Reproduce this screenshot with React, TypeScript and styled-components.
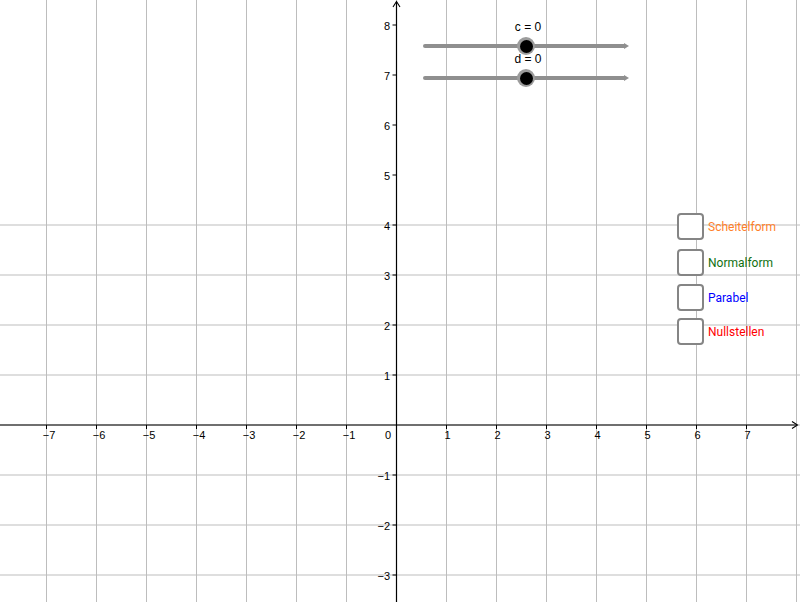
import React from "react";
import styled, { createGlobalStyle } from "styled-components";

const Global = createGlobalStyle`
  html, body { margin: 0; padding: 0; background: #ffffff; }
  body { font-family: "Liberation Sans", Arial, sans-serif; }
`;

const Stage = styled.div`
  position: relative;
  width: 800px;
  height: 602px;
  overflow: hidden;
  background: #ffffff;
`;

const Graph = styled.svg`
  display: block;
  width: 800px;
  height: 602px;
`;

const SliderStack = styled.div`
  position: absolute;
  left: 423px;
  top: 20px;
  display: flex;
  flex-direction: column;
`;

const Slider = styled.div`
  display: flex;
  flex-direction: column;
  width: 206px;
`;

const SliderLabel = styled.div`
  text-align: center;
  padding-left: 4px;
  font-family: "Liberation Sans", Arial, sans-serif;
  font-size: 12px;
  line-height: 14px;
  color: #000;
`;

const TrackRow = styled.div`
  position: relative;
  display: flex;
  align-items: center;
  height: 12px;
  margin-top: 6px;
`;

const Track = styled.div`
  flex: 1;
  height: 4px;
  background: #8f8f8f;
  border-radius: 2px 0 0 2px;
`;

const TrackTip = styled.div`
  width: 0;
  height: 0;
  border-top: 3.5px solid transparent;
  border-bottom: 3.5px solid transparent;
  border-left: 5px solid #8f8f8f;
`;

const Knob = styled.div`
  position: absolute;
  left: 94px;
  top: -3px;
  width: 18px;
  height: 18px;
  border-radius: 50%;
  background: #9c9c9c;
  display: flex;
  align-items: center;
  justify-content: center;
  &::after {
    content: "";
    width: 13px;
    height: 13px;
    border-radius: 50%;
    background: #000;
  }
`;

const CheckList = styled.div`
  position: absolute;
  left: 677px;
  top: 213px;
  display: flex;
  flex-direction: column;
`;

const CheckRow = styled.div<{ $gap: number }>`
  display: flex;
  align-items: center;
  gap: 4px;
  height: 27px;
  margin-bottom: ${(p) => p.$gap}px;
`;

const Box = styled.div`
  box-sizing: border-box;
  width: 27px;
  height: 27px;
  border: 2px solid #858585;
  border-radius: 4px;
  background: #fff;
`;

const CheckLabel = styled.span<{ $color: string }>`
  font-family: Roboto, "Liberation Sans", Arial, sans-serif;
  font-size: 12px;
  color: ${(p) => p.$color};
  line-height: 14px;
`;

const OX = 396.5;
const OY = 425;
const U = 50;

const xs = [-7, -6, -5, -4, -3, -2, -1, 1, 2, 3, 4, 5, 6, 7];
const ys = [8, 7, 6, 5, 4, 3, 2, 1, -1, -2, -3];

const num = (n: number) => (n < 0 ? "\u2212" + Math.abs(n) : String(n));

const checks = [
  { label: "Scheitelform", color: "#ff7f2a", gap: 9 },
  { label: "Normalform", color: "#107010", gap: 8 },
  { label: "Parabel", color: "#0000ff", gap: 7 },
  { label: "Nullstellen", color: "#ff0000", gap: 0 },
];

const sliders = ["c = 0", "d = 0"];

export default function App() {
  const vLines: number[] = [];
  for (let i = -8; i <= 8; i++) vLines.push(OX + i * U);
  const hLines: number[] = [];
  for (let j = -4; j <= 9; j++) hLines.push(OY + j * U);

  return (
    <Stage>
      <Global />
      <Graph viewBox="0 0 800 602">
        {vLines.map((x) => (
          <line key={"v" + x} x1={x} y1={0} x2={x} y2={602} stroke="#bdbdbd" strokeWidth={1} />
        ))}
        {hLines.map((y) => (
          <line key={"h" + y} x1={0} y1={y} x2={800} y2={y} stroke="#bdbdbd" strokeWidth={1} />
        ))}
        <line x1={0} y1={OY} x2={797} y2={OY} stroke="#000" strokeWidth={1.2} />
        <line x1={OX} y1={2} x2={OX} y2={602} stroke="#000" strokeWidth={1.2} />
        <polyline points={`${OX - 3.5},7 ${OX},1.5 ${OX + 3.5},7`} fill="none" stroke="#000" strokeWidth={1.1} />
        <polyline points={`792,${OY - 3.5} 797.5,${OY} 792,${OY + 3.5}`} fill="none" stroke="#000" strokeWidth={1.1} />
        {xs.map((n) => (
          <g key={"tx" + n}>
            <line x1={OX + n * U} y1={OY} x2={OX + n * U} y2={OY + 4} stroke="#000" strokeWidth={1} />
            <text
              x={OX + n * U + (n < 0 ? 2.5 : 1)}
              y={439}
              textAnchor="middle"
              fontFamily="'Liberation Sans', Arial, sans-serif"
              fontSize={11}
              fill="#000"
            >
              {num(n)}
            </text>
          </g>
        ))}
        {ys.map((n) => (
          <g key={"ty" + n}>
            <line x1={OX - 4} y1={OY - n * U} x2={OX} y2={OY - n * U} stroke="#000" strokeWidth={1} />
            <text
              x={390}
              y={OY - n * U + 4.5}
              textAnchor="end"
              fontFamily="'Liberation Sans', Arial, sans-serif"
              fontSize={11}
              fill="#000"
            >
              {num(n)}
            </text>
          </g>
        ))}
        <text x={391} y={439} textAnchor="end" fontFamily="'Liberation Sans', Arial, sans-serif" fontSize={11} fill="#000">
          0
        </text>
      </Graph>
      <SliderStack>
        {sliders.map((s) => (
          <Slider key={s}>
            <SliderLabel>{s}</SliderLabel>
            <TrackRow>
              <Track />
              <TrackTip />
              <Knob />
            </TrackRow>
          </Slider>
        ))}
      </SliderStack>
      <CheckList>
        {checks.map((c) => (
          <CheckRow key={c.label} $gap={c.gap}>
            <Box />
            <CheckLabel $color={c.color}>{c.label}</CheckLabel>
          </CheckRow>
        ))}
      </CheckList>
    </Stage>
  );
}
